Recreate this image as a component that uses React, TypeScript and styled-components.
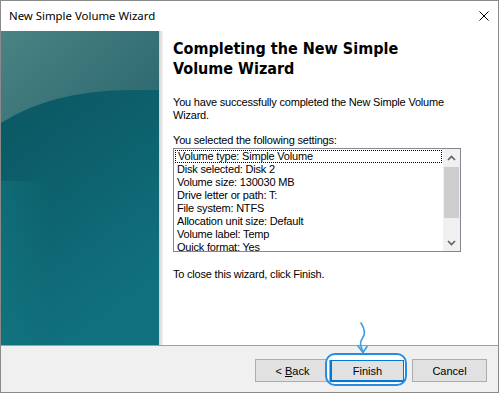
import styled, { createGlobalStyle } from 'styled-components';

const GlobalStyle = createGlobalStyle`
  html, body {
    margin: 0;
    padding: 0;
    background: #ffffff;
  }
  * {
    box-sizing: border-box;
  }
`;

const Window = styled.div`
  position: relative;
  width: 499px;
  height: 393px;
  border: 1px solid #8a8a8a;
  display: flex;
  flex-direction: column;
  background: #ffffff;
  font-family: "Liberation Sans", Arial, sans-serif;
  color: #000000;
  overflow: hidden;
`;

const TitleBar = styled.div`
  height: 30px;
  flex: none;
  display: flex;
  align-items: center;
  justify-content: space-between;
  padding: 0 9px 1px 8px;
  background: #ffffff;
`;

const Title = styled.span`
  font-family: "Segoe UI", "Noto Sans", sans-serif;
  font-size: 11.4px;
  color: #000000;
`;

const Main = styled.div`
  height: 314px;
  flex: none;
  display: flex;
`;

const SidePanel = styled.div`
  width: 158px;
  flex: none;
  display: flex;
`;

const Shade = styled.div`
  width: 4px;
  flex: none;
  background: linear-gradient(to right, #d2d2d2, #f3f3f3);
`;

const Content = styled.div`
  flex: 1;
  padding: 8px 0 0 10px;
  display: flex;
  flex-direction: column;
  letter-spacing: -0.2px;
`;

const Heading = styled.h1`
  margin: 0;
  font-family: "DejaVu Sans Condensed", "DejaVu Sans", Verdana, sans-serif;
  font-stretch: condensed;
  font-weight: 700;
  font-size: 16px;
  line-height: 20px;
  letter-spacing: 0;
  width: 260px;
`;

const Paragraph = styled.p<{ $top: number }>`
  margin: ${({ $top }) => $top}px 0 0 0;
  font-size: 11px;
  line-height: 13px;
  width: 290px;
`;

const ListBox = styled.div`
  margin-top: 1px;
  width: 288px;
  height: 104px;
  border: 1px solid #828790;
  display: flex;
  background: #ffffff;
`;

const Items = styled.div`
  flex: 1;
  overflow: hidden;
  padding-top: 1px;
`;

const Item = styled.div<{ $focused?: boolean }>`
  height: 13px;
  margin: 0 1px;
  padding-left: 2px;
  font-size: 11px;
  white-space: nowrap;
  border: ${({ $focused }) => ($focused ? '1px dotted #000000' : 'none')};
  line-height: ${({ $focused }) => ($focused ? '11px' : '13px')};
`;

const ScrollBar = styled.div`
  width: 17px;
  flex: none;
  background: #f0f0f0;
  display: flex;
  flex-direction: column;
`;

const ArrowButton = styled.div`
  height: 17px;
  flex: none;
  display: flex;
  align-items: center;
  justify-content: center;
`;

const Track = styled.div`
  flex: 1;
  padding: 1px 1px 0 1px;
`;

const Thumb = styled.div`
  height: 51px;
  background: #cdcdcd;
`;

const ButtonBar = styled.div`
  flex: 1;
  border-top: 1px solid #a0a0a0;
  background: #f0f0f0;
  display: flex;
  align-items: flex-start;
  justify-content: flex-end;
  padding: 13px 11px 0 0;
`;

const Button = styled.button<{ $primary?: boolean; $gap?: number }>`
  width: 75px;
  height: 23px;
  margin-left: ${({ $gap }) => $gap ?? 0}px;
  padding: 0;
  background: #e1e1e1;
  border: ${({ $primary }) => ($primary ? '2px solid #0078d7' : '1px solid #adadad')};
  font-family: "Liberation Sans", Arial, sans-serif;
  font-size: 11px;
  color: #000000;
  display: flex;
  align-items: center;
  justify-content: center;
`;

const Overlay = styled.svg`
  position: absolute;
  left: -1px;
  top: -1px;
  pointer-events: none;
`;

const settings = [
  'Volume type: Simple Volume',
  'Disk selected: Disk 2',
  'Volume size: 130030 MB',
  'Drive letter or path: T:',
  'File system: NTFS',
  'Allocation unit size: Default',
  'Volume label: Temp',
  'Quick format: Yes',
];

function Artwork() {
  return (
    <svg width="158" height="314" viewBox="0 0 158 314">
      <defs>
        <linearGradient id="base" x1="0" y1="0" x2="0.35" y2="1">
          <stop offset="0" stopColor="#0a545e" />
          <stop offset="0.45" stopColor="#0c5e6a" />
          <stop offset="1" stopColor="#11707e" />
        </linearGradient>
        <linearGradient id="gloss" x1="0" y1="0" x2="1" y2="0.6">
          <stop offset="0" stopColor="#4b8384" />
          <stop offset="1" stopColor="#2f6b71" />
        </linearGradient>
        <linearGradient id="edge" x1="0" y1="0" x2="1" y2="0">
          <stop offset="0" stopColor="#127a82" stopOpacity="0.5" />
          <stop offset="0.3" stopColor="#127a82" stopOpacity="0" />
        </linearGradient>
      </defs>
      <rect width="158" height="314" fill="url(#base)" />
      <rect y="150" width="158" height="164" fill="url(#edge)" />
      <path d="M0 0 H158 V59 L126 59 Q50 60 0 92 Z" fill="url(#gloss)" />
    </svg>
  );
}

function Chevron({ up }: { up?: boolean }) {
  return (
    <svg width="9" height="6" viewBox="0 0 9 6">
      <polyline
        points={up ? '1,5 4.5,1.5 8,5' : '1,1 4.5,4.5 8,1'}
        fill="none"
        stroke="#606060"
        strokeWidth="1.6"
      />
    </svg>
  );
}

export default function App() {
  return (
    <>
      <GlobalStyle />
      <Window>
        <TitleBar>
          <Title>New Simple Volume Wizard</Title>
          <svg width="10" height="10" viewBox="0 0 10 10">
            <path d="M0.5 0.5 L9.5 9.5 M9.5 0.5 L0.5 9.5" stroke="#000" strokeWidth="1" />
          </svg>
        </TitleBar>
        <Main>
          <SidePanel>
            <Artwork />
          </SidePanel>
          <Shade />
          <Content>
            <Heading>Completing the New Simple Volume Wizard</Heading>
            <Paragraph $top={17}>
              You have successfully completed the New Simple Volume Wizard.
            </Paragraph>
            <Paragraph $top={12}>You selected the following settings:</Paragraph>
            <ListBox>
              <Items>
                {settings.map((s, i) => (
                  <Item key={s} $focused={i === 0}>
                    {s}
                  </Item>
                ))}
              </Items>
              <ScrollBar>
                <ArrowButton>
                  <Chevron up />
                </ArrowButton>
                <Track>
                  <Thumb />
                </Track>
                <ArrowButton>
                  <Chevron />
                </ArrowButton>
              </ScrollBar>
            </ListBox>
            <Paragraph $top={16}>To close this wizard, click Finish.</Paragraph>
          </Content>
        </Main>
        <ButtonBar>
          <Button>
            &lt;&nbsp;<u>B</u>ack
          </Button>
          <Button $primary>Finish</Button>
          <Button $gap={7}>Cancel</Button>
        </ButtonBar>
        <Overlay width="499" height="393" viewBox="0 0 499 393">
          <path
            d="M335 354 H397 Q406 354 406 363 V376 Q406 385 397 385 H335 Q326 385 326 376 V363 Q326 354 335 354 Z M329 360 V383 H404 V360 Z"
            fill="#ffffff"
            fillRule="evenodd"
          />
          <rect x="326" y="354" width="80" height="31" rx="9" fill="none" stroke="#2a8ce0" strokeWidth="2" />
          <path
            d="M361 323 C365 329 366 334 362 339 C359 343 361 347 363 352"
            fill="none"
            stroke="#3a9be6"
            strokeWidth="1.6"
            strokeLinecap="round"
          />
          <path
            d="M358 346 L363 352.5 L367 346.5"
            fill="none"
            stroke="#3a9be6"
            strokeWidth="1.6"
            strokeLinecap="round"
            strokeLinejoin="round"
          />
        </Overlay>
      </Window>
    </>
  );
}
